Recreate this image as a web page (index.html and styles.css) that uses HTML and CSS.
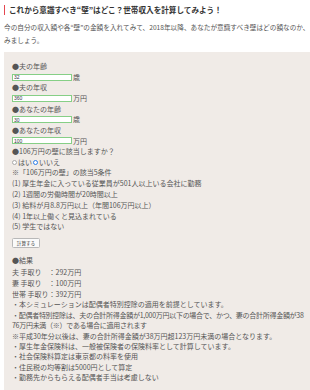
FILE: index.html
```html
<!DOCTYPE html>
<html>
<head>
<meta charset="UTF-8">
<title>世帯収入の計算</title>
<link rel="stylesheet" href="styles.css">
</head>
<body>

	<div class="page">

	<h2 class="ttl">これから意識すべき“壁”はどこ？世帯収入を計算してみよう！</h2>

	<p class="lead">今の自分の収入額や各“壁”の金額を入れてみて、2018年以降、あなたが意識すべき壁はどの額なのか、<br>みましょう。</p>

	<div class="calc">
		<div class="q">●夫の年齢</div>
		<div class="a"><input type="text" class="num" id="txthage" value="32">歳</div>
		<div class="q">●夫の年収</div>
		<div class="a"><input type="text" class="num" id="txthinc" value="360">万円</div>
		<div class="q">●あなたの年齢</div>
		<div class="a"><input type="text" class="num" id="txtwage" value="30">歳</div>
		<div class="q">●あなたの年収</div>
		<div class="a"><input type="text" class="num" id="txtwinc" value="100">万円</div>

		<div class="q">●106万円の壁に該当しますか？</div>
		<div class="a"><label><input type="radio" name="rb106" class="rb" value="y">はい</label> <label><input type="radio" name="rb106" class="rb" value="n" checked>いいえ</label></div>

		<div class="cond">
			<div>※「106万円の壁」の該当5条件</div>
			<div>(1) 厚生年金に入っている従業員が501人以上いる会社に勤務</div>
			<div>(2) 1週間の労働時間が20時間以上</div>
			<div>(3) 給料が月8.8万円以上（年間106万円以上）</div>
			<div>(4) 1年以上働くと見込まれている</div>
			<div>(5) 学生ではない</div>
		</div>

		<div class="btnrow"><input type="button" class="btn" id="btncalc" value="計算する"></div>

		<div class="res">
			<div>●結果</div>
			<div class="r1">夫 手取り　：292万円</div>
			<div>妻 手取り　：100万円</div>
			<div>世帯 手取り：392万円</div>
		</div>

		<div class="notes">
			<div>・本シミュレーションは配偶者特別控除の適用を前提としています。</div>
			<div class="long">・配偶者特別控除は、夫の合計所得金額が1,000万円以下の場合で、かつ、妻の合計所得金額が38<br>76万円未満（※）である場合に適用されます</div>
			<div>※平成30年分以後は、妻の合計所得金額が38万円超123万円未満の場合となります。</div>
			<div>・厚生年金保険料は、一般被保険者の保険料率として計算しています。</div>
			<div>・社会保険料算定は東京都の料率を使用</div>
			<div>・住民税の均等割は5000円として算定</div>
			<div>・勤務先からもらえる配偶者手当は考慮しない</div>
		</div>
	</div>

	</div>

</body>
</html>
```

FILE: styles.css
```css
html, body {
	margin: 0;
	overflow: hidden;
	background: #fff;
}

body {
	font-family: "Noto Sans CJK JP", "Noto Sans", sans-serif;
	color: #555;
}

.page {
	width: 306px;
	padding-left: 4px;
}

.ttl {
	margin: 5px 0 0;
	padding-left: 4px;
	border-left: 1.5px solid #e5464f;
	font-size: 7.6px;
	line-height: 10px;
	font-weight: bold;
	color: #333;
}

.lead {
	margin: 6px 0 0;
	font-size: 6.65px;
	line-height: 12.5px;
	white-space: nowrap;
}

.calc {
	margin-top: 6px;
	padding: 9px 0 12px 8px;
	background: #f0ebe7;
	font-size: 7px;
	line-height: 10.8px;
}

.a {
	height: 10.5px;
	display: flex;
	align-items: center;
}

.num {
	box-sizing: border-box;
	width: 60px;
	height: 7px;
	margin: 0 1px 0 0;
	padding: 0 1px;
	border: 1px solid #86cf86;
	background: #fff;
	font-family: "Liberation Sans", sans-serif;
	font-size: 5px;
	line-height: 5px;
	color: #334;
	outline: none;
}

.a label {
	display: inline-flex;
	align-items: center;
	margin-right: 1px;
}

.rb {
	appearance: none;
	-webkit-appearance: none;
	box-sizing: border-box;
	width: 5px;
	height: 5px;
	margin: 0 1px 0 0;
	border: 0.5px solid #aaa;
	border-radius: 50%;
	background: #fff;
}

.rb:checked {
	border: 1.5px solid #2b7de9;
	background: #fff;
}

.btnrow {
	margin: 5px 0 8px;
	height: 10px;
}

.btn {
	box-sizing: border-box;
	height: 10px;
	width: 28px;
	padding: 0;
	border: 0.5px solid #b8b8b8;
	border-radius: 1.5px;
	background: #fafafa;
	font-family: "Noto Sans CJK JP", sans-serif;
	font-size: 4.6px;
	color: #333;
}

.res .r1 {
	margin-top: 1px;
}

.notes {
	line-height: 10.4px;
}

.notes .long {
	white-space: nowrap;
	letter-spacing: -0.28px;
}
```
